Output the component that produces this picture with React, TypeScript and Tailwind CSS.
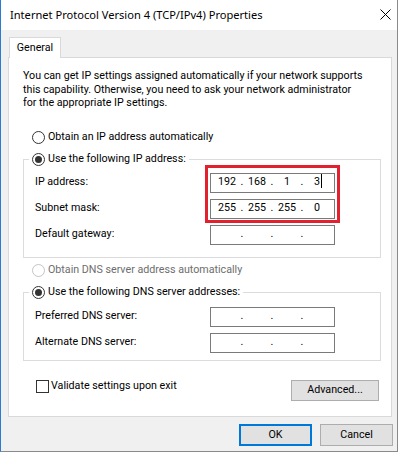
import React from 'react';

// dialog body uses a Tahoma-like face, caption a Segoe-like one
const bodyFont = "font-['Tahoma','Roboto',sans-serif]";
const titleFont = "font-['Segoe_UI','Noto_Sans',sans-serif]";

function Radio({ checked, disabled }: { checked?: boolean; disabled?: boolean }) {
  return (
    <span
      className={`flex h-[13px] w-[13px] shrink-0 items-center justify-center rounded-full border bg-white ${
        disabled ? 'border-[#c4c4c4]' : 'border-[#333333]'
      }`}
    >
      {checked && <span className="h-[7px] w-[7px] rounded-full bg-[#333333]" />}
    </span>
  );
}

function IpBox({ octets, caret }: { octets: string[]; caret?: boolean }) {
  return (
    <div className="flex h-[20px] w-[125px] items-center border border-[#7a7a7a] bg-white pl-[3px]">
      {octets.map((o, i) => (
        <React.Fragment key={i}>
          {i > 0 && <span className="w-[4px] text-center">.</span>}
          <span className="w-[26px] text-center">
            {caret && i === 3 ? (
              <span className="relative">
                {o}
                <span className="absolute right-[-2px] top-[-1px] h-[14px] w-px bg-black" />
              </span>
            ) : (
              o
            )}
          </span>
        </React.Fragment>
      ))}
    </div>
  );
}

function FieldRow({ label, octets, caret }: { label: string; octets: string[]; caret?: boolean }) {
  return (
    <div className="flex h-[20px] items-center">
      <span className="w-[175px]">{label}</span>
      <IpBox octets={octets} caret={caret} />
    </div>
  );
}

const empty = ['', '', '', ''];

export default function App() {
  return (
    <div
      className={`${bodyFont} flex h-[452px] w-[398px] flex-col border-b border-l border-r border-b-[#8a8a8a] border-l-[#2b7bd3] border-r-[#8a8a8a] text-[10.7px] leading-none text-black`}
    >
      {/* title bar */}
      <div className={`${titleFont} flex h-[30px] shrink-0 items-center justify-between bg-white pl-[9px] pr-[6px] text-[11.1px]`}>
        <span>Internet Protocol Version 4 (TCP/IPv4) Properties</span>
        <svg width="11" height="11" viewBox="0 0 11 11" className="mb-[1px]">
          <path d="M0.5 0.5 L10.5 10.5 M10.5 0.5 L0.5 10.5" stroke="#000" strokeWidth="1" fill="none" />
        </svg>
      </div>

      <div className="flex flex-1 flex-col bg-[#f0f0f0] pl-[7px] pr-[5px] pt-[7px]">
        {/* tab */}
        <div className="relative z-10 mb-[-1px] ml-px flex h-[21px] w-[52px] items-center justify-center border border-b-0 border-[#d9d9d9] bg-white">
          General
        </div>

        {/* panel */}
        <div className="flex h-[360px] flex-col border border-[#d9d9d9] bg-white pl-[14px]">
          <p className="mt-[11px] whitespace-nowrap leading-[13.5px]">
            You can get IP settings assigned automatically if your network supports
            <br />
            this capability. Otherwise, you need to ask your network administrator
            <br />
            for the appropriate IP settings.
          </p>

          <div className="ml-[9px] mt-[20px] flex h-[16px] items-center gap-[3px]">
            <Radio />
            <span>Obtain an IP address automatically</span>
          </div>

          <fieldset className="mt-[6px] w-[358px] border border-[#dcdcdc]">
            <legend className="ml-[5px] flex h-[16px] items-center gap-[3px] px-[3px]">
              <Radio checked />
              <span>Use the following IP address:</span>
            </legend>
            <div className="pl-[11px] pb-[12px] pt-[5px]">
              <div className="relative flex flex-col gap-[6px]">
                <FieldRow label="IP address:" octets={['192', '168', '1', '3']} caret />
                <FieldRow label="Subnet mask:" octets={['255', '255', '255', '0']} />
                <div className="pointer-events-none absolute left-[170px] top-[-8px] h-[58px] w-[135px] border-[3px] border-[#e3202e]" />
              </div>
              <div className="mt-[6px]">
                <FieldRow label="Default gateway:" octets={empty} />
              </div>
            </div>
          </fieldset>

          <div className="ml-[9px] mt-[5px] flex h-[16px] items-center gap-[3px] text-[#6d6d6d]">
            <Radio disabled />
            <span>Obtain DNS server address automatically</span>
          </div>

          <fieldset className="mt-[6px] w-[358px] border border-[#dcdcdc]">
            <legend className="ml-[5px] flex h-[16px] items-center gap-[3px] px-[3px]">
              <Radio checked />
              <span>Use the following DNS server addresses:</span>
            </legend>
            <div className="flex flex-col gap-[6px] pl-[11px] pb-[7px] pt-[6px]">
              <FieldRow label="Preferred DNS server:" octets={empty} />
              <FieldRow label="Alternate DNS server:" octets={empty} />
            </div>
          </fieldset>

          <div className="mt-[19px] flex w-[358px] items-start justify-between pr-[2px]">
            <div className="ml-[13px] flex h-[13px] items-center gap-[2px]">
              <span className="h-[13px] w-[13px] border border-[#333333] bg-white" />
              <span>Validate settings upon exit</span>
            </div>
            <button className="flex h-[21px] w-[88px] items-center justify-center border border-[#adadad] bg-[#e1e1e1]">
              Advanced...
            </button>
          </div>
        </div>

        {/* dialog buttons */}
        <div className="mr-[-1px] mt-[7px] flex justify-end gap-[8px]">
          <button className="flex h-[22px] w-[73px] items-center justify-center border-2 border-[#0078d7] bg-[#e1e1e1]">
            OK
          </button>
          <button className="flex h-[22px] w-[73px] items-center justify-center border border-[#adadad] bg-[#e1e1e1]">
            Cancel
          </button>
        </div>
      </div>
    </div>
  );
}
